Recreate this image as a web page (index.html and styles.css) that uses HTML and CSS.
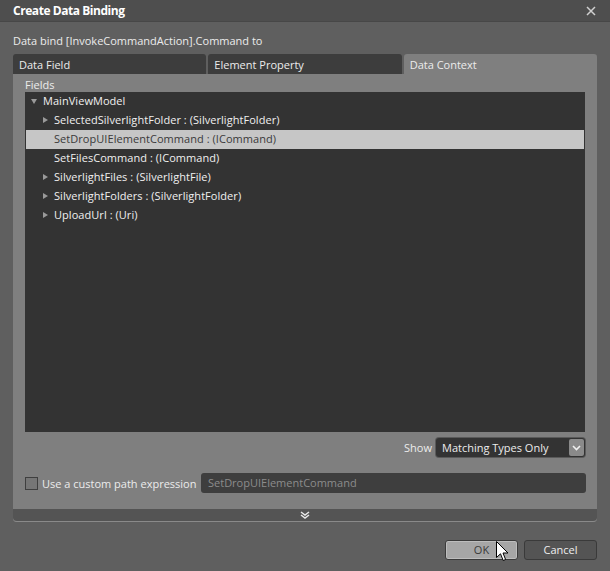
FILE: index.html
```html
<!DOCTYPE html>
<html>
<head>
<meta charset="utf-8">
<link rel="stylesheet" href="styles.css">
</head>
<body>
<div class="window">
  <div class="titlebar">
    <span class="title">Create Data Binding</span>
    <svg class="close" width="10" height="10" viewBox="0 0 10 10"><path d="M1 1L9 9M9 1L1 9" stroke="#d0d0d0" stroke-width="1.5"/></svg>
  </div>
  <div class="content">
    <div class="prompt">Data bind [InvokeCommandAction].Command to</div>
    <div class="tabs">
      <div class="tab">Data Field</div>
      <div class="tab">Element Property</div>
      <div class="tab active">Data Context</div>
    </div>
    <div class="panel">
      <div class="panel-body">
        <div class="fields-label">Fields</div>
        <div class="tree">
          <div class="row lvl0"><span class="tri down"></span>MainViewModel</div>
          <div class="row lvl1"><span class="tri right"></span>SelectedSilverlightFolder : (SilverlightFolder)</div>
          <div class="row lvl1 selected"><span class="tri none"></span>SetDropUIElementCommand : (ICommand)</div>
          <div class="row lvl1"><span class="tri none"></span>SetFilesCommand : (ICommand)</div>
          <div class="row lvl1"><span class="tri right"></span>SilverlightFiles : (SilverlightFile)</div>
          <div class="row lvl1"><span class="tri right"></span>SilverlightFolders : (SilverlightFolder)</div>
          <div class="row lvl1"><span class="tri right"></span>UploadUrl : (Uri)</div>
        </div>
        <div class="show-row">
          <span class="show-label">Show</span>
          <div class="dropdown">
            <span class="dd-text">Matching Types Only</span>
            <span class="dd-btn"><svg width="9" height="6" viewBox="0 0 9 6"><path d="M1 1L4.5 4.5L8 1" stroke="#f0f0f0" stroke-width="1.6" fill="none"/></svg></span>
          </div>
        </div>
        <div class="path-row">
          <span class="checkbox"></span>
          <span class="path-label">Use a custom path expression</span>
          <div class="textbox">SetDropUIElementCommand</div>
        </div>
      </div>
      <div class="expander">
        <svg width="12" height="8" viewBox="0 0 12 8"><path d="M2 1L6 4L10 1M2 4L6 7L10 4" stroke="#e8e8e8" stroke-width="1.5" fill="none"/></svg>
      </div>
    </div>
    <div class="buttons">
      <div class="btn ok">OK</div>
      <div class="btn cancel">Cancel</div>
    </div>
  </div>
  <svg class="cursor" width="13" height="21" viewBox="0 0 13 21"><path d="M0.5 0.5L0.5 16.5L4.5 12.8L7.2 19.5L9.6 18.5L7 12L12 12Z" fill="#ffffff" stroke="#000000" stroke-width="1"/></svg>
</div>
</body>
</html>
```
FILE: styles.css
```css
html, body {
  margin: 0;
  padding: 0;
}
body {
  font-family: "Open Sans", "Noto Sans", sans-serif;
  font-size: 11px;
  color: #ececec;
  background: #5f5f5f;
}
.window {
  position: relative;
  width: 610px;
  height: 571px;
  background: #5f5f5f;
  overflow: hidden;
}
.titlebar {
  height: 22px;
  display: flex;
  align-items: center;
  justify-content: space-between;
  padding: 0 14px 0 13px;
  background: #4e4e4e;
  border-bottom: 1px solid #474747;
  box-sizing: border-box;
}
.title {
  font-weight: bold;
  font-size: 12px;
  color: #ffffff;
  letter-spacing: -0.45px;
}
.close {
  display: block;
}
.content {
  padding: 0 13px;
}
.prompt {
  margin-top: 9px;
  height: 20px;
  line-height: 20px;
}
.tabs {
  margin-top: 3px;
  display: flex;
  gap: 2px;
  height: 20px;
}
.tab {
  flex: 1;
  background: #3d3d3d;
  border-radius: 3px 3px 0 0;
  padding-left: 6px;
  line-height: 22px;
}
.tab.active {
  background: #7f7f7f;
}
.panel {
  background: #7f7f7f;
  height: 448px;
  display: flex;
  flex-direction: column;
  border-radius: 0 0 4px 4px;
}
.panel-body {
  flex: 1;
  padding: 0 12px;
}
.fields-label {
  height: 18px;
  line-height: 21px;
}
.tree {
  background: #333333;
  height: 340px;
  box-sizing: border-box;
}
.row {
  height: 19px;
  line-height: 18px;
  padding-bottom: 1px;
  box-sizing: border-box;
  display: flex;
  align-items: center;
  color: #f0f0f0;
  margin: 0 1px;
  letter-spacing: 0.05px;
}
.row.lvl0 {
  padding-left: 4px;
}
.row.lvl1 {
  padding-left: 17px;
}
.row.selected {
  background: #c6c6c6;
  color: #3a3a3a;
}
.tri {
  display: inline-block;
  width: 0;
  height: 0;
}
.tri.down {
  border-left: 3.5px solid transparent;
  border-right: 3.5px solid transparent;
  border-top: 5px solid #9a9a9a;
  margin-left: 1px;
  margin-right: 6px;
}
.tri.right {
  border-top: 3.5px solid transparent;
  border-bottom: 3.5px solid transparent;
  border-left: 5px solid #9a9a9a;
  margin-right: 6px;
}
.tri.none {
  width: 5px;
  margin-right: 6px;
}
.show-row {
  margin-top: 6px;
  display: flex;
  justify-content: flex-end;
  align-items: center;
  height: 19px;
}
.show-label {
  margin-right: 4px;
}
.dropdown {
  width: 149px;
  height: 19px;
  background: #333333;
  border-radius: 3px;
  display: flex;
  align-items: center;
  justify-content: space-between;
  box-sizing: border-box;
  padding-left: 6px;
  padding-right: 1px;
  box-shadow: 0 0 0 1px #5a5a5a;
}
.dd-btn {
  width: 15px;
  height: 17px;
  background: #8a8a8a;
  border-radius: 2px;
  display: flex;
  align-items: center;
  justify-content: center;
}
.path-row {
  margin-top: 16px;
  display: flex;
  align-items: center;
  height: 20px;
}
.checkbox {
  width: 11px;
  height: 11px;
  border: 1px solid #3f3f3f;
  background: #767676;
  margin-right: 4px;
}
.path-label {
  width: 159px;
}
.textbox {
  flex: 1;
  height: 20px;
  line-height: 20px;
  background: #3e3e3e;
  border-radius: 3px;
  padding-left: 7px;
  color: #8c8c8c;
  margin-right: -1px;
}
.expander {
  height: 13px;
  background: #545454;
  border-bottom: 1px solid #8a8a8a;
  border-radius: 0 0 4px 4px;
  display: flex;
  align-items: center;
  justify-content: center;
  box-sizing: border-box;
}
.expander svg {
  display: block;
}
.buttons {
  margin-top: 18px;
  display: flex;
  justify-content: flex-end;
  gap: 6px;
}
.btn {
  width: 73px;
  height: 20px;
  line-height: 18px;
  box-sizing: border-box;
  text-align: center;
  border-radius: 3px;
  border: 1px solid #3a3a3a;
}
.btn.ok {
  background: #a6a6a6;
  color: #3a3a3a;
  box-shadow: inset 0 0 0 1px #bdbdbd;
}
.btn.cancel {
  background: #545454;
  color: #eeeeee;
}
.cursor {
  position: absolute;
  left: 496px;
  top: 541px;
}
```
